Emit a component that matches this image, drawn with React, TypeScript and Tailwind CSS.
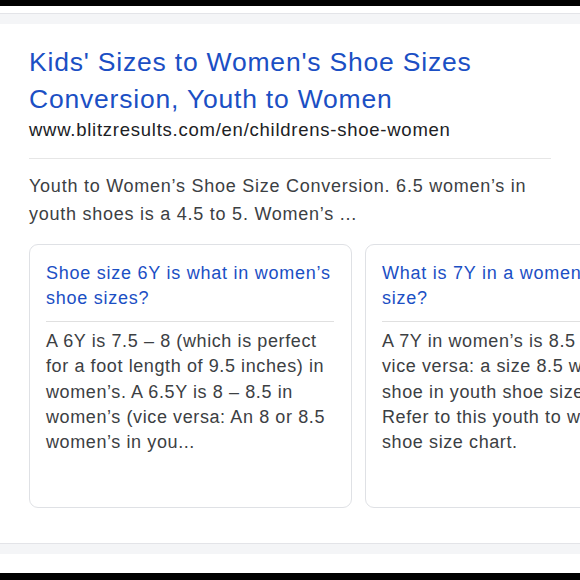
export default function App() {
  return (
    <div className="w-[580px] h-[580px] bg-white flex flex-col overflow-hidden" style={{ fontFamily: '"Liberation Sans", Arial, sans-serif' }}>
      <div className="h-[6px] bg-black shrink-0" />
      <div className="h-[7px] bg-white shrink-0" />
      <div className="h-[11px] bg-[#f4f5f7] border-t border-[#e3e4e8] shrink-0" />
      <div className="flex-1 bg-white pl-[29px] pt-[20px] overflow-hidden">
        <div className="w-[522px]">
          <div className="text-[26.5px] leading-[37px] tracking-[0.8px] text-[#1b4fc4]">
            Kids' Sizes to Women's Shoe Sizes Conversion, Youth to Women
          </div>
          <div className="text-[18.5px] leading-[28px] tracking-[0.75px] text-[#202124] mt-[-2px]">www.blitzresults.com/en/childrens-shoe-women</div>
          <div className="h-px bg-[#e6e6e6] mt-[14px]" />
          <div className="text-[18px] leading-[28px] tracking-[0.75px] text-[#3c4043] mt-[13px]">
            Youth to Women’s Shoe Size Conversion. 6.5 women’s in youth shoes is a 4.5 to 5. Women’s ...
          </div>
        </div>
        <div className="flex gap-[13px] mt-[16px] w-[700px]">
          <div className="w-[323px] h-[264px] shrink-0 rounded-[9px] border border-[#dfe1e5] px-[16px] pt-[16px]">
            <div className="text-[18px] leading-[25px] tracking-[0.75px] text-[#1b4fc4]">Shoe size 6Y is what in women’s shoe sizes?</div>
            <div className="h-px bg-[#e0e0e0] mt-[10px] mr-[1px]" />
            <div className="text-[18px] leading-[25.3px] tracking-[0.6px] text-[#3c4043] mt-[7px]">
              A 6Y is 7.5 – 8 (which is perfect for a foot length of 9.5 inches) in women’s. A 6.5Y is 8 – 8.5 in women’s (vice versa: An 8 or 8.5 women’s in you...
            </div>
          </div>
          <div className="w-[323px] h-[264px] shrink-0 rounded-[9px] border border-[#dfe1e5] px-[16px] pt-[16px]">
            <div className="text-[18px] leading-[25px] tracking-[0.75px] text-[#1b4fc4]">What is 7Y in a women’s shoe size?</div>
            <div className="h-px bg-[#e0e0e0] mt-[10px]" />
            <div className="text-[18px] leading-[25.3px] tracking-[0.6px] text-[#3c4043] mt-[7px]">
              A 7Y in women’s is 8.5 – 9 (and vice versa: a size 8.5 women’s shoe in youth shoe sizes is a 7Y). Refer to this youth to women’s shoe size chart.
            </div>
          </div>
        </div>
      </div>
      <div className="h-[11px] bg-[#f4f5f7] border-t border-[#e3e4e8] shrink-0" />
      <div className="h-[19px] bg-white shrink-0" />
      <div className="h-[7px] bg-black shrink-0" />
    </div>
  );
}
